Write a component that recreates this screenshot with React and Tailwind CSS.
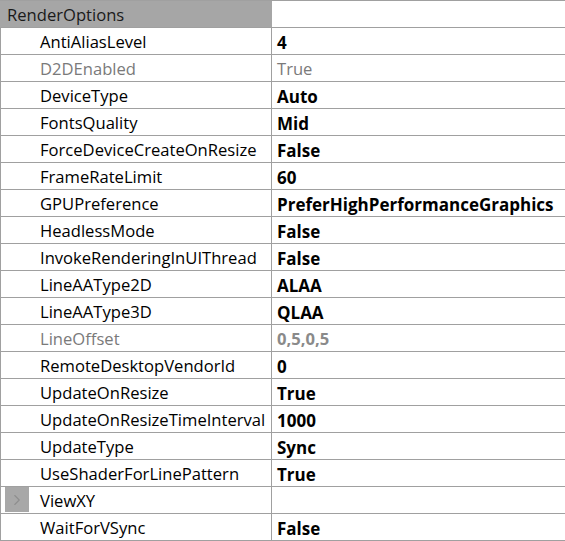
import { ChevronRight } from 'lucide-react';

const rows = [
  { name: 'AntiAliasLevel', value: '4' },
  { name: 'D2DEnabled', value: 'True', disabled: true },
  { name: 'DeviceType', value: 'Auto' },
  { name: 'FontsQuality', value: 'Mid' },
  { name: 'ForceDeviceCreateOnResize', value: 'False' },
  { name: 'FrameRateLimit', value: '60' },
  { name: 'GPUPreference', value: 'PreferHighPerformanceGraphics' },
  { name: 'HeadlessMode', value: 'False' },
  { name: 'InvokeRenderingInUIThread', value: 'False' },
  { name: 'LineAAType2D', value: 'ALAA' },
  { name: 'LineAAType3D', value: 'QLAA' },
  { name: 'LineOffset', value: '0,5,0,5', disabled: true, boldDisabled: true },
  { name: 'RemoteDesktopVendorId', value: '0' },
  { name: 'UpdateOnResize', value: 'True' },
  { name: 'UpdateOnResizeTimeInterval', value: '1000' },
  { name: 'UpdateType', value: 'Sync' },
  { name: 'UseShaderForLinePattern', value: 'True' },
  { name: 'ViewXY', value: '', expandable: true },
  { name: 'WaitForVSync', value: 'False' },
];

const Row = ({ row }) => {
  return (
    <div className="flex h-[27px] border-b border-[#a0a0a0]">
      <div className="relative flex w-[272px] shrink-0 items-center border-x border-[#a0a0a0] pl-[39px] pt-[2px]">
        {row.expandable && (
          <div className="absolute left-[4px] top-0 flex h-[25px] w-[24px] items-center justify-center bg-[#a8a8a8]">
            <ChevronRight size={18} strokeWidth={1.5} className="text-[#8e8e8e]" />
          </div>
        )}
        <span className={row.disabled ? 'text-[#7a7a7a]' : 'text-black'}>{row.name}</span>
      </div>
      <div className="flex flex-1 items-center pl-[5px] pt-[2px]">
        <span
          className={
            row.disabled
              ? row.boldDisabled
                ? 'font-bold text-[#8a8a8a]'
                : 'text-[#7a7a7a]'
              : 'font-bold text-black text-[17px]'
          }
        >
          {row.value}
        </span>
      </div>
    </div>
  );
};

export default function App() {
  return (
    <div
      className="w-[565px] h-[541px] overflow-hidden bg-white text-[16.6px] leading-none"
      style={{ fontFamily: '"Open Sans", "Noto Sans", sans-serif' }}
    >
      <div className="border-t border-[#a0a0a0]">
        {/* encabezado de categoria */}
        <div className="flex h-[27px] border-b border-[#a0a0a0]">
          <div className="flex w-[272px] shrink-0 items-center bg-[#a6a6a6] pl-[7px] pt-[2px] text-[#1a1a1a]">
            RenderOptions
          </div>
          <div className="flex-1" />
        </div>
        {rows.map((row) => (
          <Row key={row.name} row={row} />
        ))}
      </div>
    </div>
  );
}
